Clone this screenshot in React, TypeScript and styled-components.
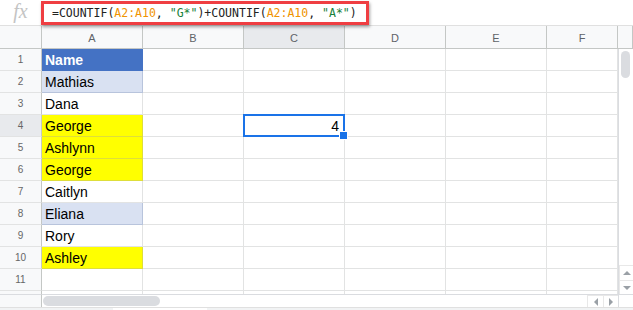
import React from "react";
import styled, { createGlobalStyle, css } from "styled-components";

const Global = createGlobalStyle`
  html, body { margin: 0; padding: 0; background: #fff; overflow: hidden; }
  body { font-family: "Liberation Sans", Arial, sans-serif; }
  * { box-sizing: border-box; }
`;

const Page = styled.div`
  width: 633px;
  height: 310px;
  display: flex;
  flex-direction: column;
  background: #fff;
`;

const FormulaBar = styled.div`
  height: 26px;
  display: flex;
  align-items: stretch;
  border-bottom: 1px solid #e0e0e0;
`;

const FxLabel = styled.div`
  width: 41px;
  display: flex;
  align-items: center;
  justify-content: center;
  font-family: "Liberation Serif", "Times New Roman", serif;
  font-style: italic;
  font-size: 20px;
  color: #c4c4c4;
  padding-bottom: 2px;
`;

const FormulaInput = styled.div`
  margin-top: 1px;
  width: 328px;
  height: 24px;
  border: 3px solid #ef3e42;
  box-shadow: 1px 2px 3px rgba(0, 0, 0, 0.35);
  display: flex;
  align-items: center;
  padding-left: 8px;
  font-family: "DejaVu Sans Mono", "Liberation Mono", monospace;
  font-size: 11.5px;
  color: #222;
  white-space: pre;
  position: relative;
  z-index: 2;
  background: #fff;
`;

const Ref = styled.span`
  color: #f09300;
`;

const Str = styled.span`
  color: #188038;
`;

const Grid = styled.div`
  display: grid;
  grid-template-columns: 42px repeat(5, 101px) 71px 15px;
  grid-template-rows: 23px repeat(11, 22px) 3px 13px;
`;

const ColHead = styled.div<{ $active?: boolean }>`
  background: ${(p) => (p.$active ? "#e8eaed" : "#f8f9fa")};
  border-right: 1px solid #c4c7c5;
  border-bottom: 1px solid #c4c7c5;
  display: flex;
  align-items: center;
  justify-content: center;
  font-size: 11px;
  color: #5f6368;
  padding-top: 2px;
`;

const Corner = styled.div`
  background: #f8f9fa;
  border-right: 1px solid #c4c7c5;
  border-bottom: 1px solid #c4c7c5;
`;

const RowHead = styled.div<{ $active?: boolean }>`
  background: ${(p) => (p.$active ? "#e8eaed" : "#f8f9fa")};
  border-right: 1px solid #c4c7c5;
  border-bottom: 1px solid #e2e3e3;
  display: flex;
  align-items: center;
  justify-content: center;
  font-size: 10px;
  color: #666;
`;

const Cell = styled.div<{
  $bg?: string;
  $line?: string;
  $bold?: boolean;
  $color?: string;
  $right?: boolean;
  $selected?: boolean;
}>`
  position: relative;
  background: ${(p) => p.$bg || "#fff"};
  border-right: 1px solid ${(p) => p.$line || "#e2e3e3"};
  border-bottom: 1px solid ${(p) => p.$line || "#e2e3e3"};
  display: flex;
  align-items: center;
  justify-content: ${(p) => (p.$right ? "flex-end" : "flex-start")};
  padding: 1px 5px 0 3px;
  font-size: 14px;
  font-weight: ${(p) => (p.$bold ? 700 : 400)};
  color: ${(p) => p.$color || "#000"};
  white-space: nowrap;
  ${(p) =>
    p.$selected &&
    css`
      &::before {
        content: "";
        position: absolute;
        left: -1px;
        top: -1px;
        right: -1px;
        bottom: -1px;
        border: 2px solid #1a73e8;
        z-index: 1;
      }
      &::after {
        content: "";
        position: absolute;
        right: -4px;
        bottom: -4px;
        width: 7px;
        height: 7px;
        background: #1a73e8;
        border: 1px solid #fff;
        z-index: 2;
      }
    `}
`;

const Partial = styled.div<{ $head?: boolean }>`
  background: ${(p) => (p.$head ? "#f8f9fa" : "#fff")};
  border-right: 1px solid ${(p) => (p.$head ? "#c4c7c5" : "#e2e3e3")};
`;

const VScroll = styled.div`
  grid-column: 8;
  grid-row: 2 / span 12;
  border-left: 1px solid #dadce0;
  background: #fff;
  display: flex;
  flex-direction: column;
  padding: 2px 3px 0 2px;
`;

const VThumb = styled.div`
  width: 9px;
  height: 27px;
  border-radius: 5px;
  background: #dadce0;
`;

const Spacer = styled.div`
  flex: 1;
`;

const ArrowBtn = styled.div<{ $w?: number; $h?: number }>`
  width: ${(p) => (p.$w ? `${p.$w}px` : "auto")};
  height: ${(p) => (p.$h ? `${p.$h}px` : "auto")};
  display: flex;
  align-items: center;
  justify-content: center;
  border-top: 1px solid #e8e8e8;
  border-left: 1px solid #e8e8e8;
`;

const VArrows = styled.div`
  margin: 0 -3px 0 -2px;
  display: flex;
  flex-direction: column;
`;

const HScrollHead = styled.div`
  background: #f8f9fa;
  border-top: 1px solid #dadce0;
  border-right: 1px solid #c4c7c5;
`;

const HScroll = styled.div`
  grid-column: 2 / span 6;
  border-top: 1px solid #dadce0;
  display: flex;
  align-items: center;
  padding-left: 1px;
`;

const HThumb = styled.div`
  width: 117px;
  height: 10px;
  border-radius: 5px;
  background: #dadce0;
`;

const HArrows = styled.div`
  display: flex;
  height: 100%;
  align-self: stretch;
`;

const CornerBox = styled.div`
  border-top: 1px solid #dadce0;
  border-left: 1px solid #dadce0;
  background: #fff;
`;

const BottomStrip = styled.div`
  flex: 1;
  background: #f1f3f4;
  border-top: 1px solid #e0e0e0;
  display: flex;
  padding-left: 113px;
`;

const Tab = styled.div`
  width: 94px;
  background: #fff;
`;

const Tri = ({ dir }: { dir: "up" | "down" | "left" | "right" }) => {
  const pts = {
    up: "0,4 4,0 8,4",
    down: "0,0 8,0 4,4",
    left: "4,0 4,8 0,4",
    right: "0,0 0,8 4,4",
  }[dir];
  const vertical = dir === "up" || dir === "down";
  return (
    <svg width={vertical ? 8 : 4} height={vertical ? 4 : 8} viewBox={vertical ? "0 0 8 4" : "0 0 4 8"}>
      <polygon points={pts} fill="#9aa0a6" />
    </svg>
  );
};

const cols = ["A", "B", "C", "D", "E", "F"];

type CellDef = { text?: string; bg?: string; line?: string; bold?: boolean; color?: string };

const BLUE: CellDef = { bg: "#d9e1f2", line: "#b8c4dc" };
const YEL: CellDef = { bg: "#ffff00", line: "#dede3a" };

const colA: CellDef[] = [
  { text: "Name", bg: "#4472c4", line: "#4472c4", bold: true, color: "#fff" },
  { text: "Mathias", ...BLUE },
  { text: "Dana" },
  { text: "George", ...YEL },
  { text: "Ashlynn", ...YEL },
  { text: "George", ...YEL },
  { text: "Caitlyn" },
  { text: "Eliana", ...BLUE },
  { text: "Rory" },
  { text: "Ashley", ...YEL },
  {},
];

export default function App() {
  return (
    <Page>
      <Global />
      <FormulaBar>
        <FxLabel>fx</FxLabel>
        <FormulaInput>
          =COUNTIF(<Ref>A2:A10</Ref>, <Str>"G*"</Str>)+COUNTIF(<Ref>A2:A10</Ref>, <Str>"A*"</Str>)
        </FormulaInput>
      </FormulaBar>
      <Grid>
        <Corner />
        {cols.map((c) => (
          <ColHead key={c} $active={c === "C"}>
            {c}
          </ColHead>
        ))}
        <ColHead />
        {colA.map((a, i) => (
          <React.Fragment key={i}>
            <RowHead $active={i === 3}>{i + 1}</RowHead>
            <Cell $bg={a.bg} $line={a.line} $bold={a.bold} $color={a.color}>
              {a.text}
            </Cell>
            <Cell />
            {i === 3 ? (
              <Cell $right $selected>
                4
              </Cell>
            ) : (
              <Cell />
            )}
            <Cell />
            <Cell />
            <Cell />
          </React.Fragment>
        ))}
        <VScroll>
          <VThumb />
          <Spacer />
          <VArrows>
            <ArrowBtn $h={15}>
              <Tri dir="up" />
            </ArrowBtn>
            <ArrowBtn $h={14}>
              <Tri dir="down" />
            </ArrowBtn>
          </VArrows>
        </VScroll>
        <Partial $head />
        <Partial />
        <Partial />
        <Partial />
        <Partial />
        <Partial />
        <Partial />
        <HScrollHead />
        <HScroll>
          <HThumb />
          <Spacer />
          <HArrows>
            <ArrowBtn $w={16}>
              <Tri dir="left" />
            </ArrowBtn>
            <ArrowBtn $w={15}>
              <Tri dir="right" />
            </ArrowBtn>
          </HArrows>
        </HScroll>
        <CornerBox />
      </Grid>
      <BottomStrip>
        <Tab />
      </BottomStrip>
    </Page>
  );
}
